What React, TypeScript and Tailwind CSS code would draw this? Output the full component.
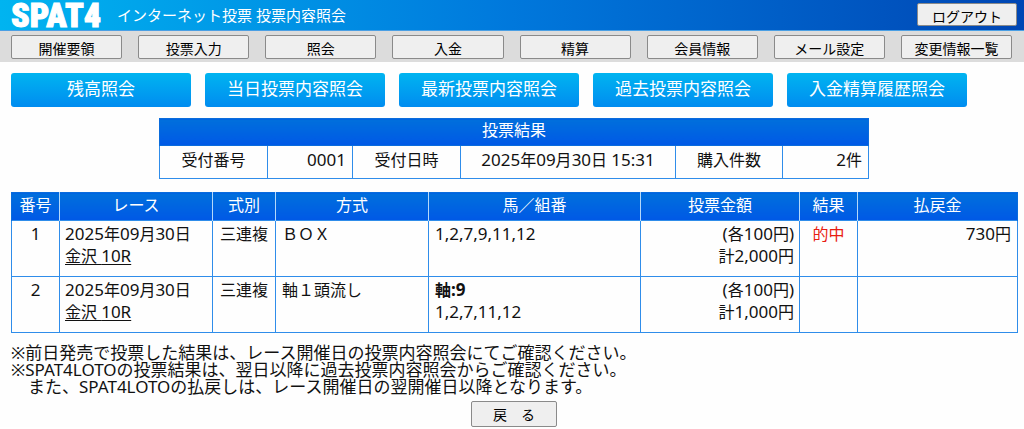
import { Fragment, type ReactNode } from "react";

const NAV = ["開催要領", "投票入力", "照会", "入金", "精算", "会員情報", "メール設定", "変更情報一覧"];

const TABS = ["残高照会", "当日投票内容照会", "最新投票内容照会", "過去投票内容照会", "入金精算履歴照会"];

const COLUMNS = [
  { label: "番号", width: "w-[48px]" },
  { label: "レース", width: "w-[153px]" },
  { label: "式別", width: "w-[63px]" },
  { label: "方式", width: "w-[153px]" },
  { label: "馬／組番", width: "w-[212px]" },
  { label: "投票金額", width: "w-[159px]" },
  { label: "結果", width: "w-[58px]" },
  { label: "払戻金", width: "w-[160px]" },
];

const BETS = [
  {
    no: "1", date: "2025年09月30日", race: "金沢 10R", kind: "三連複", method: "ＢＯＸ",
    axis: "", horses: "1,2,7,9,11,12", each: "(各100円)", total: "計2,000円", result: "的中", payout: "730円",
  },
  {
    no: "2", date: "2025年09月30日", race: "金沢 10R", kind: "三連複", method: "軸１頭流し",
    axis: "軸:9", horses: "1,2,7,11,12", each: "(各100円)", total: "計1,000円", result: "", payout: "",
  },
];

/** Sets Latin letters and digits one size larger than the kanji around them. */
function Mixed({ children }: { children: string }) {
  return (
    <>
      {children.split(/([\x21-\x7e]+)/).map((part, i) =>
        i % 2 ? (
          <span key={i} className="text-[17px]">{part}</span>
        ) : (
          <Fragment key={i}>{part}</Fragment>
        ),
      )}
    </>
  );
}

function GreyButton({ className, children }: { className: string; children: ReactNode }) {
  return (
    <button
      type="button"
      className={`flex items-center justify-center whitespace-nowrap rounded-[2px] border border-[#8a8a8a] bg-[#efefef] text-sm leading-5 text-black ${className}`}
    >
      {children}
    </button>
  );
}

const head = "bg-linear-to-b from-[#006fdc] to-[#0058e6] p-0 text-center align-top font-normal text-white";
const cell = "border border-[#2f8dea] align-top";

export default function App() {
  return (
    <div className="bg-[#fefefe] font-['Noto_Sans','Noto_Sans_CJK_JP',sans-serif] text-base text-[#111]">
      <header className="flex h-[31px] items-center border-b border-[#4a9fe4] bg-linear-to-r from-[#00b4f0] via-[#0078dc] to-[#0046b4] pr-[7px] pl-[11px]">
        <span className="w-[92px] pt-px font-['Liberation_Sans_Narrow','Roboto_Condensed',sans-serif] text-[34px] leading-[29px] font-black text-white [-webkit-text-stroke:1px_white]">
          SPAT4
        </span>
        <h1 className="ml-[14px] flex-1 text-[15px] leading-[30px] text-white">インターネット投票 投票内容照会</h1>
        <GreyButton className="mb-[2px] h-[23px] w-[100px] pt-[5px]">ログアウト</GreyButton>
      </header>

      <nav className="flex h-[31px] gap-4 bg-[#dcdcdc] pt-1 pr-3 pl-[11px]">
        {NAV.map((label) => (
          <GreyButton key={label} className="h-6 flex-1 pt-1">{label}</GreyButton>
        ))}
      </nav>

      <main className="pt-[11px] pr-[7px] pl-[11px]">
        <div className="flex gap-[14px]">
          {TABS.map((label) => (
            <button
              key={label}
              type="button"
              className="h-[34px] w-[180px] rounded-[3px] bg-linear-to-b from-[#00b4f0] to-[#008cf0] pb-[2px] text-[17px] leading-[30px] whitespace-nowrap text-white"
            >
              {label}
            </button>
          ))}
        </div>

        <table className="mx-auto mt-[11px] w-[709px] table-fixed border-collapse">
          <colgroup>
            <col className="w-[108px]" />
            <col className="w-[85px]" />
            <col className="w-[108px]" />
            <col className="w-[215px]" />
            <col className="w-[107px]" />
            <col className="w-[86px]" />
          </colgroup>
          <thead>
            <tr className="h-[27px]">
              <th colSpan={6} className={`${head} border border-[#0a6cdc] leading-[22px]`}>投票結果</th>
            </tr>
          </thead>
          <tbody className="leading-[28px]">
            <tr className="h-[33px]">
              <th scope="row" className={`${cell} font-normal`}>受付番号</th>
              <td className={`${cell} pr-[6px] text-right`}><Mixed>0001</Mixed></td>
              <th scope="row" className={`${cell} font-normal`}>受付日時</th>
              <td className={`${cell} text-center`}><Mixed>2025年09月30日 15:31</Mixed></td>
              <th scope="row" className={`${cell} font-normal`}>購入件数</th>
              <td className={`${cell} pr-[6px] text-right`}><Mixed>2件</Mixed></td>
            </tr>
          </tbody>
        </table>

        <table className="mt-[13px] w-full table-fixed border-collapse">
          <colgroup>
            {COLUMNS.map((c) => (
              <col key={c.label} className={c.width} />
            ))}
          </colgroup>
          <thead>
            <tr className="h-[28px]">
              {COLUMNS.map((c) => (
                <th
                  key={c.label}
                  scope="col"
                  className={`${head} border-x border-t border-x-[#b4d8fa] border-t-[#0a6cdc] leading-[24px] first:border-l-[#0a6cdc] last:border-r-[#0a6cdc]`}
                >
                  {c.label}
                </th>
              ))}
            </tr>
          </thead>
          <tbody className="leading-[22px]">
            {BETS.map((b) => (
              <tr key={b.no} className="h-14">
                <td className={`${cell} pt-[2px] text-center`}><Mixed>{b.no}</Mixed></td>
                <td className={`${cell} px-[5px] pt-[2px]`}>
                  <div><Mixed>{b.date}</Mixed></div>
                  <a href="#race" className="block underline underline-offset-2"><Mixed>{b.race}</Mixed></a>
                </td>
                <td className={`${cell} pt-[2px] text-center whitespace-nowrap`}>{b.kind}</td>
                <td className={`${cell} px-[6px] pt-[2px]`}>{b.method}</td>
                <td className={`${cell} px-[6px] pt-[2px]`}>
                  {b.axis && <div className="font-bold"><Mixed>{b.axis}</Mixed></div>}
                  <div><Mixed>{b.horses}</Mixed></div>
                </td>
                <td className={`${cell} px-[5px] pt-[2px] text-right`}>
                  <div><Mixed>{b.each}</Mixed></div>
                  <div><Mixed>{b.total}</Mixed></div>
                </td>
                <td className={`${cell} pt-[2px] text-center text-[#e81c10]`}>{b.result}</td>
                <td className={`${cell} px-[6px] pt-[2px] text-right`}><Mixed>{b.payout}</Mixed></td>
              </tr>
            ))}
          </tbody>
        </table>

        <div className="mt-[11px] text-[17px] leading-[17px]">
          <p>※前日発売で投票した結果は、レース開催日の投票内容照会にてご確認ください。</p>
          <p>※SPAT4LOTOの投票結果は、翌日以降に過去投票内容照会からご確認ください。</p>
          <p>　また、SPAT4LOTOの払戻しは、レース開催日の翌開催日以降となります。</p>
        </div>

        <GreyButton className="mx-auto mt-[6px] h-[26px] w-[86px] pt-[2px]">戻　る</GreyButton>
      </main>
    </div>
  );
}
